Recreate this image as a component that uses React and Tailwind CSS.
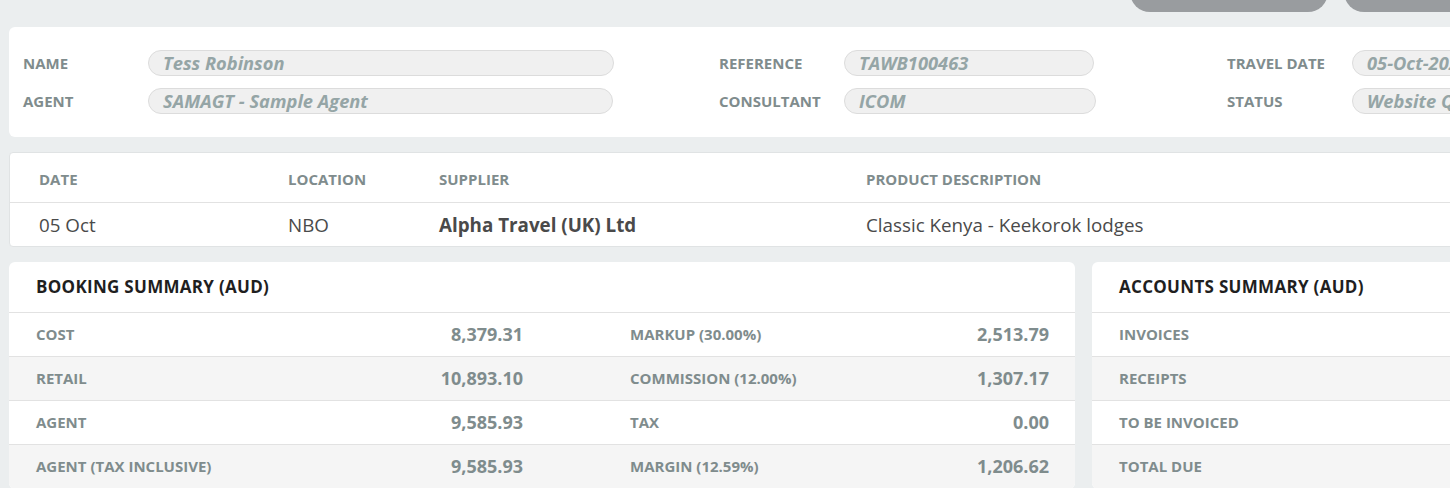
import React from "react";

const font = { fontFamily: '"Open Sans", "Noto Sans", sans-serif' };

function Field({ label, value, labelW, pillW }) {
  return (
    <div className="flex items-center shrink-0">
      <div className={`${labelW} shrink-0 text-[15px] font-bold text-[#7f8c8d]`}>{label}</div>
      <div className={`${pillW} shrink-0 h-[26px] rounded-full border border-[#dcdcdc] bg-[#f0f0f0] pl-[14px] flex items-center overflow-hidden whitespace-nowrap text-[18.3px] italic font-bold text-[#95a5a6]`}>
        {value}
      </div>
    </div>
  );
}

const booking = [
  ["COST", "8,379.31", "MARKUP (30.00%)", "2,513.79"],
  ["RETAIL", "10,893.10", "COMMISSION (12.00%)", "1,307.17"],
  ["AGENT", "9,585.93", "TAX", "0.00"],
  ["AGENT (TAX INCLUSIVE)", "9,585.93", "MARGIN (12.59%)", "1,206.62"],
];

const accounts = ["INVOICES", "RECEIPTS", "TO BE INVOICED", "TOTAL DUE"];

export default function App() {
  return (
    <div className="w-[1450px] h-[488px] overflow-hidden bg-[#ebeeef]" style={font}>
      <div className="w-[1700px] pl-[9px]">
        {/* top action buttons, cut off by the viewport */}
        <div className="h-[27px] overflow-hidden flex items-start">
          <div className="ml-[1121px] -mt-[28px] w-[198px] h-[40px] shrink-0 rounded-full bg-[#999c9f]" />
          <div className="ml-[16px] -mt-[28px] w-[198px] h-[40px] shrink-0 rounded-full bg-[#999c9f]" />
        </div>

        {/* customer info */}
        <div className="bg-white rounded-[6px] h-[110px] pl-[14px] pt-[23px] flex flex-col gap-[12px]">
          <div className="flex">
            <div className="w-[696px] shrink-0"><Field label="NAME" value="Tess Robinson" labelW="w-[125px]" pillW="w-[466px]" /></div>
            <div className="w-[508px] shrink-0"><Field label="REFERENCE" value="TAWB100463" labelW="w-[125px]" pillW="w-[250px]" /></div>
            <Field label="TRAVEL DATE" value="05-Oct-2023" labelW="w-[125px]" pillW="w-[250px]" />
          </div>
          <div className="flex">
            <div className="w-[696px] shrink-0"><Field label="AGENT" value="SAMAGT - Sample Agent" labelW="w-[125px]" pillW="w-[465px]" /></div>
            <div className="w-[508px] shrink-0"><Field label="CONSULTANT" value="ICOM" labelW="w-[125px]" pillW="w-[252px]" /></div>
            <Field label="STATUS" value="Website Quote" labelW="w-[125px]" pillW="w-[250px]" />
          </div>
        </div>

        {/* product line */}
        <div className="mt-[15px] bg-white rounded-[4px] border border-[#e0e3e4]">
          <div className="h-[50px] flex items-center pt-[4px] pl-[29px] text-[15px] font-bold text-[#7f8c8d] border-b border-[#e2e2e2]">
            <div className="w-[249px]">DATE</div>
            <div className="w-[151px]">LOCATION</div>
            <div className="w-[427px]">SUPPLIER</div>
            <div>PRODUCT DESCRIPTION</div>
          </div>
          <div className="h-[43px] flex items-center pt-[1px] pl-[29px] text-[18.8px] text-[#4a4a4a]">
            <div className="w-[249px]">05 Oct</div>
            <div className="w-[151px]">NBO</div>
            <div className="w-[427px] font-bold">Alpha Travel (UK) Ltd</div>
            <div>Classic Kenya - Keekorok lodges</div>
          </div>
        </div>

        {/* summaries */}
        <div className="mt-[15px] flex gap-[17px] items-start">
          <div className="w-[1066px] shrink-0 bg-white rounded-[6px] overflow-hidden">
            <div className="h-[51px] flex items-center pl-[27px] text-[17px] tracking-[0.3px] font-bold text-[#1f1f1f] border-b border-[#e2e2e2]">
              BOOKING SUMMARY (AUD)
            </div>
            {booking.map((r, i) => (
              <div key={r[0]} className={`h-[44px] flex items-center pl-[27px] pr-[26px] border-b border-[#e2e2e2] ${i % 2 ? "bg-[#f5f5f5]" : "bg-white"}`}>
                <div className="w-[487px] flex justify-between items-center">
                  <span className="text-[15px] font-bold text-[#7f8c8d]">{r[0]}</span>
                  <span className="text-[18px] font-bold text-[#7f8c8d]">{r[1]}</span>
                </div>
                <div className="ml-[107px] flex-1 flex justify-between items-center">
                  <span className="text-[15px] font-bold text-[#7f8c8d]">{r[2]}</span>
                  <span className="text-[18px] font-bold text-[#7f8c8d]">{r[3]}</span>
                </div>
              </div>
            ))}
          </div>

          <div className="flex-1 bg-white rounded-[6px] overflow-hidden">
            <div className="h-[51px] flex items-center pl-[27px] text-[17px] tracking-[0.3px] font-bold text-[#1f1f1f] border-b border-[#e2e2e2]">
              ACCOUNTS SUMMARY (AUD)
            </div>
            {accounts.map((a, i) => (
              <div key={a} className={`h-[44px] flex items-center pl-[27px] border-b border-[#e2e2e2] ${i % 2 ? "bg-[#f5f5f5]" : "bg-white"}`}>
                <span className="text-[15px] font-bold text-[#7f8c8d]">{a}</span>
              </div>
            ))}
          </div>
        </div>
      </div>
    </div>
  );
}
